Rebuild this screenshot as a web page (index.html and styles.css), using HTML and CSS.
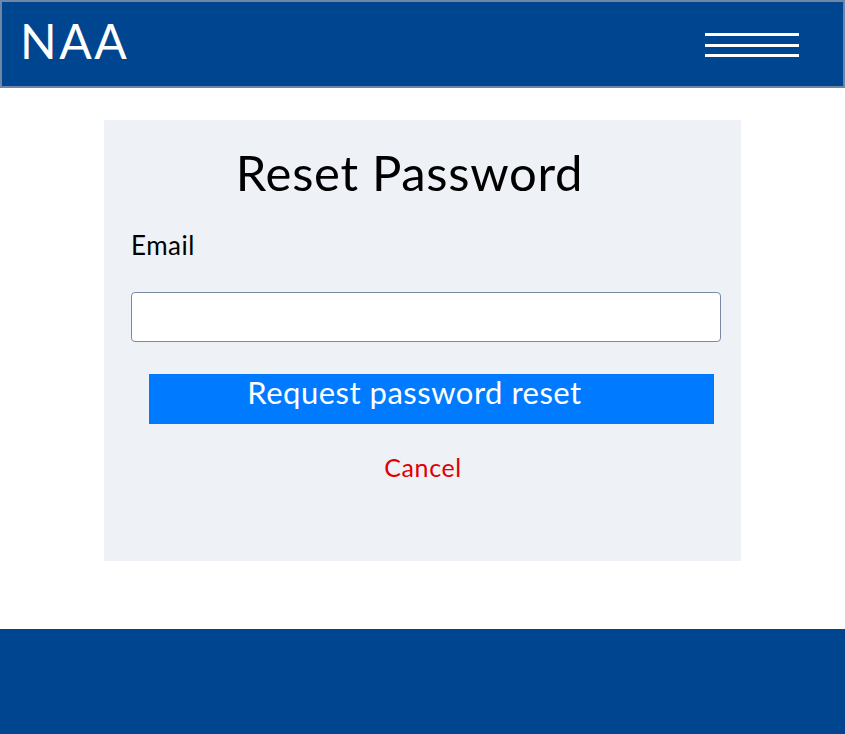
FILE: index.html
```html
<!DOCTYPE html>
<html lang="en">
<head>
<meta charset="utf-8">
<title>Reset Password</title>
<link rel="stylesheet" href="styles.css">
</head>
<body>
<header class="topbar">
  <div class="brand">NAA</div>
  <button class="menu" aria-label="Menu">
    <span class="bar"></span>
    <span class="bar"></span>
    <span class="bar"></span>
  </button>
</header>
<main class="main">
  <form class="card">
    <h1 class="title">Reset Password</h1>
    <label class="label" for="email">Email</label>
    <input class="input" id="email" type="email">
    <button class="submit" type="button">Request password reset</button>
    <a class="cancel" href="#">Cancel</a>
  </form>
</main>
<footer class="footer"></footer>
</body>
</html>
```

FILE: styles.css
```css
* { box-sizing: border-box; }
html, body { margin: 0; padding: 0; }
body {
  font-family: Lato, "Open Sans", sans-serif;
  background: #ffffff;
  color: #000;
}
.topbar {
  height: 88px;
  background: #00458f;
  border: 2px solid #6f86a6;
  display: flex;
  align-items: flex-start;
  justify-content: space-between;
  padding: 0 44px 0 18px;
}
.brand {
  color: #fff;
  font-size: 48px;
  font-weight: 400;
  line-height: 48px;
  letter-spacing: 2.5px;
  margin-top: 14.7px;
}
.menu {
  background: none;
  border: 0;
  padding: 0;
  display: flex;
  flex-direction: column;
  gap: 7.5px;
  width: 94px;
  margin-top: 31px;
}
.bar {
  display: block;
  height: 3px;
  width: 94px;
  background: #fff;
}
.main {
  height: 541px;
  padding-top: 32px;
}
.card {
  width: 637px;
  height: 441px;
  margin: 0 auto;
  background: #eef1f6;
  padding: 23px 20px 0 27px;
  display: flex;
  flex-direction: column;
}
.title {
  margin: 0;
  font-size: 49px;
  font-weight: 400;
  line-height: 58px;
  letter-spacing: 0.7px;
  text-align: center;
  padding-right: 33px;
}
.label {
  font-size: 26px;
  line-height: 30px;
  letter-spacing: 0.5px;
  margin-top: 29px;
}
.input {
  margin-top: 32px;
  height: 50px;
  width: 590px;
  border: 1px solid #7b8aa3;
  border-radius: 4px;
  background: #fff;
}
.submit {
  margin: 32px 7px 0 18px;
  height: 50px;
  background: #007bff;
  border: 0;
  color: #fff;
  font-family: Lato, "Open Sans", sans-serif;
  font-size: 31px;
  line-height: 36px;
  letter-spacing: 0.5px;
  padding: 0 34px 14px 0;
  text-align: center;
}
.cancel {
  align-self: center;
  color: #e00000;
  text-decoration: none;
  font-size: 25px;
  line-height: 30px;
  letter-spacing: 0.6px;
  margin-top: 28px;
  margin-right: 6px;
}
.footer {
  height: 105px;
  background: #00458f;
}
```
